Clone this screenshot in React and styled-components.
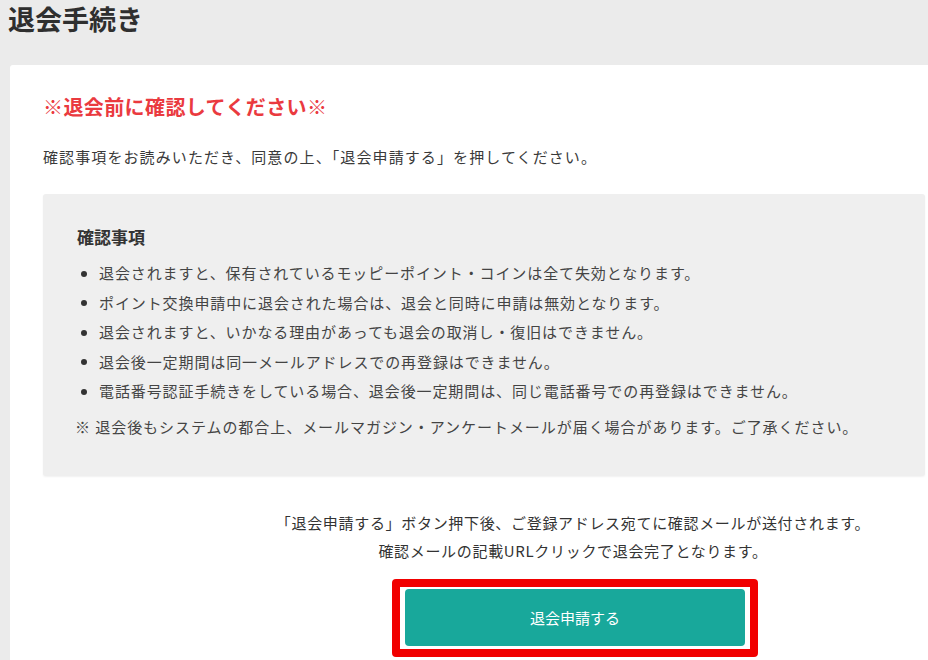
import React from 'react'
import styled, { createGlobalStyle } from 'styled-components'

const GlobalStyle = createGlobalStyle`
    html, body {
        margin: 0;
        padding: 0;
        background: #ebebeb;
        overflow: hidden;
    }
    body {
        font-family: "Noto Sans CJK JP", "Noto Sans", sans-serif;
        color: #333;
    }
`

const Page = styled.div`
    width: 928px;
    height: 660px;
    overflow: hidden;
    padding-left: 8px;
    box-sizing: border-box;
`

const Title = styled.h1`
    margin: 0 0 27px;
    font-size: 27px;
    line-height: 38px;
    font-weight: 700;
    color: #2f2f2f;
`

const Card = styled.section`
    margin-left: 2px;
    width: 1126px;
    background: #fff;
    border-radius: 3px;
    padding: 28px 33px 40px;
    box-sizing: border-box;
`

const Warning = styled.h2`
    margin: 0 0 24px;
    font-size: 20px;
    line-height: 28px;
    letter-spacing: 0.4px;
    font-weight: 700;
    color: #ea3a3f;
`

const Lead = styled.p`
    margin: 0 0 25px;
    font-size: 15px;
    line-height: 24px;
    letter-spacing: 1.1px;
    color: #3a3a3a;
`

const CheckBox = styled.div`
    width: 882px;
    background: #efefef;
    border-radius: 3px;
    box-shadow: 0 1px 2px rgba(0, 0, 0, 0.06);
    padding: 31px 34px 34px;
    box-sizing: border-box;
`

const CheckTitle = styled.h3`
    margin: 0 0 9px;
    font-size: 17px;
    line-height: 24px;
    font-weight: 700;
    color: #333;
`

const List = styled.ul`
    list-style: none;
    margin: 0;
    padding: 0;
`

const Item = styled.li`
    position: relative;
    padding-left: 22px;
    font-size: 15px;
    line-height: 29.5px;
    letter-spacing: 0.9px;
    color: #444;

    &::before {
        content: '';
        position: absolute;
        left: 4px;
        top: 12.5px;
        width: 6px;
        height: 6px;
        border-radius: 50%;
        background: #333;
    }
`

const Note = styled.p`
    margin: 6px 0 0 -2px;
    font-size: 15px;
    line-height: 30px;
    letter-spacing: 0.95px;
    color: #444;
`

const Action = styled.div`
    margin-top: 33px;
    display: flex;
    flex-direction: column;
    align-items: center;
`

const Info = styled.p`
    margin: 0;
    font-size: 15px;
    line-height: 28px;
    letter-spacing: 0.68px;
    text-align: center;
    color: #333;
`

const Highlight = styled.div`
    margin-top: 14px;
    margin-left: 4px;
    border: 8px solid #f10000;
    border-radius: 4px;
    padding: 2px 5px 3px;
`

const SubmitButton = styled.button`
    display: block;
    width: 340px;
    height: 57px;
    border: none;
    border-radius: 4px;
    background: #18a89b;
    color: #fff;
    font-family: inherit;
    font-size: 15px;
    cursor: pointer;
`

const items = [
    '退会されますと、保有されているモッピーポイント・コインは全て失効となります。',
    'ポイント交換申請中に退会された場合は、退会と同時に申請は無効となります。',
    '退会されますと、いかなる理由があっても退会の取消し・復旧はできません。',
    '退会後一定期間は同一メールアドレスでの再登録はできません。',
    '電話番号認証手続きをしている場合、退会後一定期間は、同じ電話番号での再登録はできません。',
]

export default function App() {
    return (
        <Page>
            <GlobalStyle />
            <Title>退会手続き</Title>
            <Card>
                <Warning>※退会前に確認してください※</Warning>
                <Lead>確認事項をお読みいただき、同意の上、「退会申請する」を押してください。</Lead>

                <CheckBox>
                    <CheckTitle>確認事項</CheckTitle>
                    <List>
                        {items.map((text) => (
                            <Item key={text}>{text}</Item>
                        ))}
                    </List>
                    <Note>※ 退会後もシステムの都合上、メールマガジン・アンケートメールが届く場合があります。ご了承ください。</Note>
                </CheckBox>

                <Action>
                    <Info>「退会申請する」ボタン押下後、ご登録アドレス宛てに確認メールが送付されます。</Info>
                    <Info>確認メールの記載URLクリックで退会完了となります。</Info>
                    <Highlight>
                        <SubmitButton>退会申請する</SubmitButton>
                    </Highlight>
                </Action>
            </Card>
        </Page>
    )
}
